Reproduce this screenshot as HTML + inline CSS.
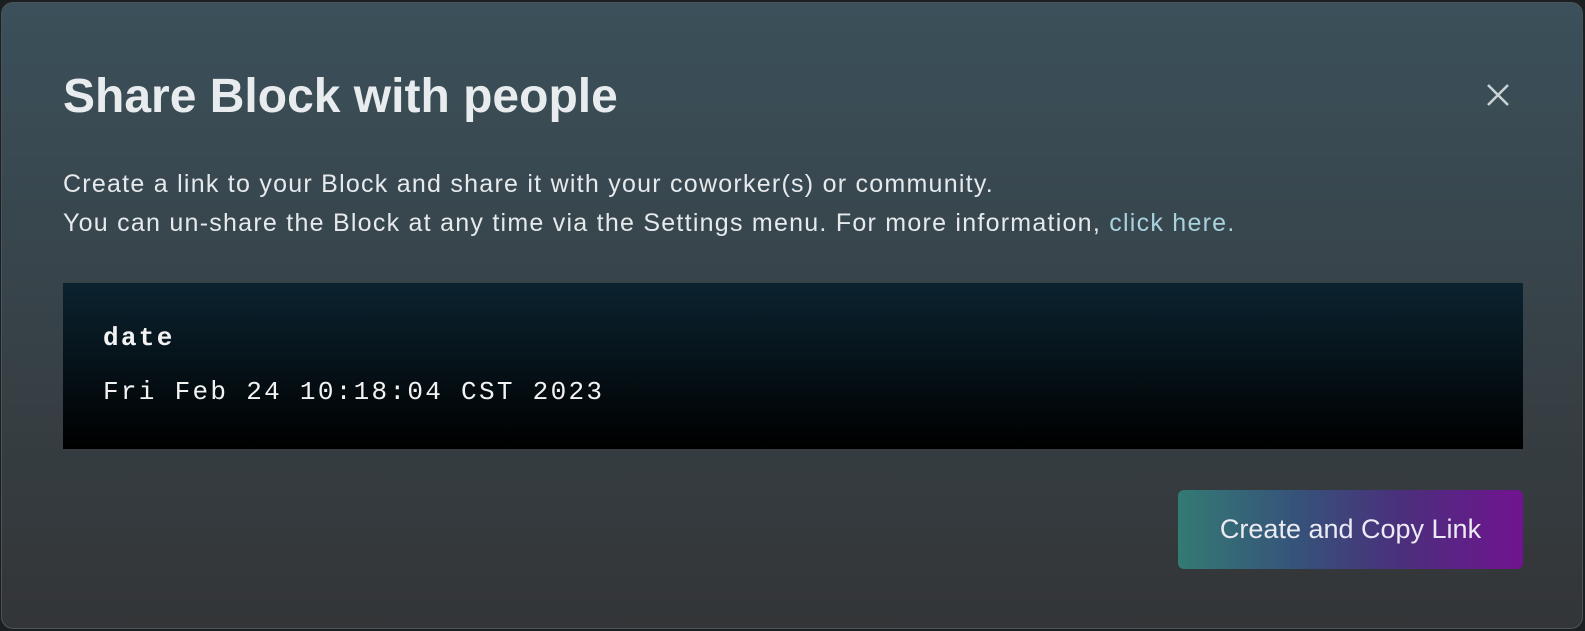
<!DOCTYPE html>
<html><head><style>
html,body{margin:0;padding:0;width:1585px;height:631px;overflow:hidden;background:#1c1f21;font-family:"Liberation Sans",sans-serif;}
.modal{position:absolute;left:1px;top:2px;width:1580px;height:625px;border:1px solid #4b5559;border-radius:12px;background:linear-gradient(#3b505a,#333537);}
h1{position:absolute;left:61px;top:66px;margin:0;font-size:48px;font-weight:bold;color:#e8ecee;white-space:nowrap;}
.p{position:absolute;left:61px;font-size:25px;letter-spacing:1.25px;color:#e6eaec;white-space:nowrap;}
.p a{color:#a9d2de;text-decoration:none;}
.code{position:absolute;left:61px;top:280px;width:1460px;height:166px;background:linear-gradient(#0b2330,#000);font-family:"Liberation Mono",monospace;color:#f2f2f2;font-size:26px;letter-spacing:2.3px;}
.btn{position:absolute;left:1176px;top:487px;width:345px;height:79px;border-radius:6px;background:linear-gradient(90deg,#347a74,#36527a 35%,#4b2f7c 65%,#711390);color:#eceaf3;font-size:27px;text-align:center;line-height:79px;}
</style></head><body>
<div class="modal">
<h1>Share Block with people</h1>
<svg style="position:absolute;left:1484px;top:80px" width="24" height="24" viewBox="0 0 24 24"><path d="M2 2L22 22M22 2L2 22" stroke="#c9d2d5" stroke-width="2.6"/></svg>
<div class="p" style="top:167px">Create a link to your Block and share it with your coworker(s) or community.</div>
<div class="p" style="top:206px">You can un-share the Block at any time via the Settings menu. For more information, <a>click here.</a></div>
<div class="code">
<div style="position:absolute;left:40px;top:40px;font-weight:bold">date</div>
<div style="position:absolute;left:40px;top:94px">Fri Feb 24 10:18:04 CST 2023</div>
</div>
<div class="btn">Create and Copy Link</div>
</div>
</body></html>
